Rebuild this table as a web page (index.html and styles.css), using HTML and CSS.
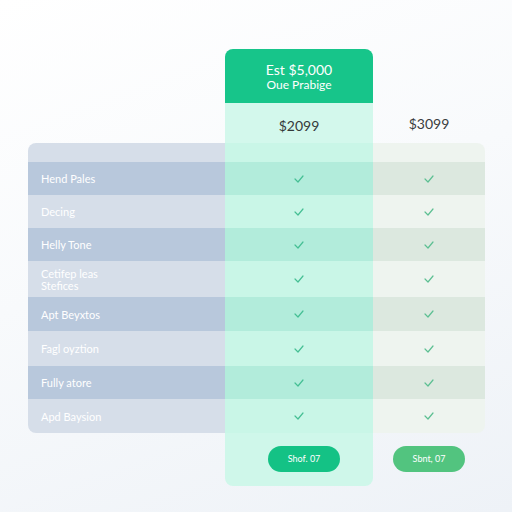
FILE: index.html
```html
<!DOCTYPE html>
<html>
<head>
<meta charset="utf-8">
<link rel="stylesheet" href="styles.css">
</head>
<body>
<div class="board">
  <div class="top-blank"></div>
  <div class="plan-top">
    <div class="plan-head">
      <div class="plan-title">Est $5,000</div>
      <div class="plan-sub">Oue Prabige</div>
    </div>
    <div class="plan-price">$2099</div>
  </div>
  <div class="alt-price">$3099</div>

  <div class="cell lbl head first-l"></div>
  <div class="cell mint head"></div>
  <div class="cell alt head first-r"></div>

  <div class="cell lbl dark h33">Hend Pales</div>
  <div class="cell mint dark h33"><svg class="chk" viewBox="0 0 10 8"><polyline points="1,4 4,7 9,1"/></svg></div>
  <div class="cell alt dark h33"><svg class="chk" viewBox="0 0 10 8"><polyline points="1,4 4,7 9,1"/></svg></div>

  <div class="cell lbl h33">Decing</div>
  <div class="cell mint h33"><svg class="chk" viewBox="0 0 10 8"><polyline points="1,4 4,7 9,1"/></svg></div>
  <div class="cell alt h33"><svg class="chk" viewBox="0 0 10 8"><polyline points="1,4 4,7 9,1"/></svg></div>

  <div class="cell lbl dark h33">Helly Tone</div>
  <div class="cell mint dark h33"><svg class="chk" viewBox="0 0 10 8"><polyline points="1,4 4,7 9,1"/></svg></div>
  <div class="cell alt dark h33"><svg class="chk" viewBox="0 0 10 8"><polyline points="1,4 4,7 9,1"/></svg></div>

  <div class="cell lbl h36 two">Cetifep leas<br>Stefices</div>
  <div class="cell mint h36"><svg class="chk" viewBox="0 0 10 8"><polyline points="1,4 4,7 9,1"/></svg></div>
  <div class="cell alt h36"><svg class="chk" viewBox="0 0 10 8"><polyline points="1,4 4,7 9,1"/></svg></div>

  <div class="cell lbl dark h34">Apt Beyxtos</div>
  <div class="cell mint dark h34"><svg class="chk" viewBox="0 0 10 8"><polyline points="1,4 4,7 9,1"/></svg></div>
  <div class="cell alt dark h34"><svg class="chk" viewBox="0 0 10 8"><polyline points="1,4 4,7 9,1"/></svg></div>

  <div class="cell lbl h35">Fagl oyztion</div>
  <div class="cell mint h35"><svg class="chk" viewBox="0 0 10 8"><polyline points="1,4 4,7 9,1"/></svg></div>
  <div class="cell alt h35"><svg class="chk" viewBox="0 0 10 8"><polyline points="1,4 4,7 9,1"/></svg></div>

  <div class="cell lbl dark h33">Fully atore</div>
  <div class="cell mint dark h33"><svg class="chk" viewBox="0 0 10 8"><polyline points="1,4 4,7 9,1"/></svg></div>
  <div class="cell alt dark h33"><svg class="chk" viewBox="0 0 10 8"><polyline points="1,4 4,7 9,1"/></svg></div>

  <div class="cell lbl h34 last-l">Apd Baysion</div>
  <div class="cell mint h34"><svg class="chk" viewBox="0 0 10 8"><polyline points="1,4 4,7 9,1"/></svg></div>
  <div class="cell alt h34 last-r"><svg class="chk" viewBox="0 0 10 8"><polyline points="1,4 4,7 9,1"/></svg></div>

  <div class="bot-blank"></div>
  <div class="plan-foot"><button class="btn btn-main">Shof. 07</button></div>
  <div class="alt-foot"><button class="btn btn-alt">Sbnt, 07</button></div>
</div>
</body>
</html>
```

FILE: styles.css
```css
html, body {
  margin: 0;
  padding: 0;
}
body {
  width: 512px;
  height: 512px;
  overflow: hidden;
  background: linear-gradient(160deg, #ffffff 0%, #f8fafc 45%, #eef2f7 100%);
  font-family: Lato, "Noto Sans", sans-serif;
}
.board {
  display: grid;
  grid-template-columns: 197px 148px 112px;
  margin: 49px 0 0 28px;
}
.top-blank, .bot-blank {
  background: transparent;
}
.plan-top {
  display: flex;
  flex-direction: column;
}
.plan-head {
  height: 54px;
  background: #17c58a;
  border-radius: 8px 8px 0 0;
  display: flex;
  flex-direction: column;
  align-items: center;
  justify-content: center;
  color: #ffffff;
  padding-top: 2px;
  box-sizing: border-box;
}
.plan-title {
  font-size: 14px;
  line-height: 16px;
}
.plan-sub {
  font-size: 12px;
  line-height: 14px;
}
.plan-price {
  height: 40px;
  background: #d3f8ec;
  display: flex;
  align-items: center;
  justify-content: center;
  font-size: 14px;
  color: #353a3a;
  padding-top: 4px;
  box-sizing: border-box;
}
.alt-price {
  align-self: end;
  height: 40px;
  display: flex;
  align-items: center;
  justify-content: center;
  font-size: 14px;
  color: #3a3d40;
  padding-top: 1px;
  box-sizing: border-box;
}
.cell {
  display: flex;
  align-items: center;
  box-sizing: border-box;
}
.lbl {
  background: #d6dee9;
  color: #ffffff;
  font-size: 11px;
  padding-left: 13px;
}
.lbl.dark { background: #b8c8dc; }
.mint {
  background: #c9f6e7;
  justify-content: center;
}
.mint.dark { background: #b2ecdb; }
.alt {
  background: #eef4ef;
  justify-content: center;
}
.alt.dark { background: #dce8df; }
.head { height: 19px; }
.h33 { height: 33px; }
.h34 { height: 34px; }
.h35 { height: 35px; }
.h36 { height: 36px; }
.two { line-height: 12px; padding-top: 2px; }
.first-l { border-top-left-radius: 8px; }
.first-r { border-top-right-radius: 8px; }
.last-l { border-bottom-left-radius: 8px; }
.last-r { border-bottom-right-radius: 8px; }
.chk {
  width: 10px;
  height: 8px;
  fill: none;
  stroke: #45bf94;
  stroke-width: 1.2;
  stroke-linecap: round;
  stroke-linejoin: round;
}
.alt .chk { stroke: #5cbf92; }
.plan-foot {
  height: 53px;
  background: #cff7ea;
  border-radius: 0 0 8px 8px;
  display: flex;
  align-items: center;
  justify-content: center;
  padding-left: 10px;
  padding-bottom: 2px;
  box-sizing: border-box;
}
.alt-foot {
  height: 53px;
  display: flex;
  align-items: center;
  justify-content: center;
  padding-bottom: 2px;
  box-sizing: border-box;
}
.btn {
  width: 72px;
  height: 26px;
  border: none;
  border-radius: 13px;
  color: #ffffff;
  font-family: Lato, "Noto Sans", sans-serif;
  font-size: 9px;
  padding: 0;
}
.btn-main { background: #14c285; }
.btn-alt { background: #52c47f; }
```
